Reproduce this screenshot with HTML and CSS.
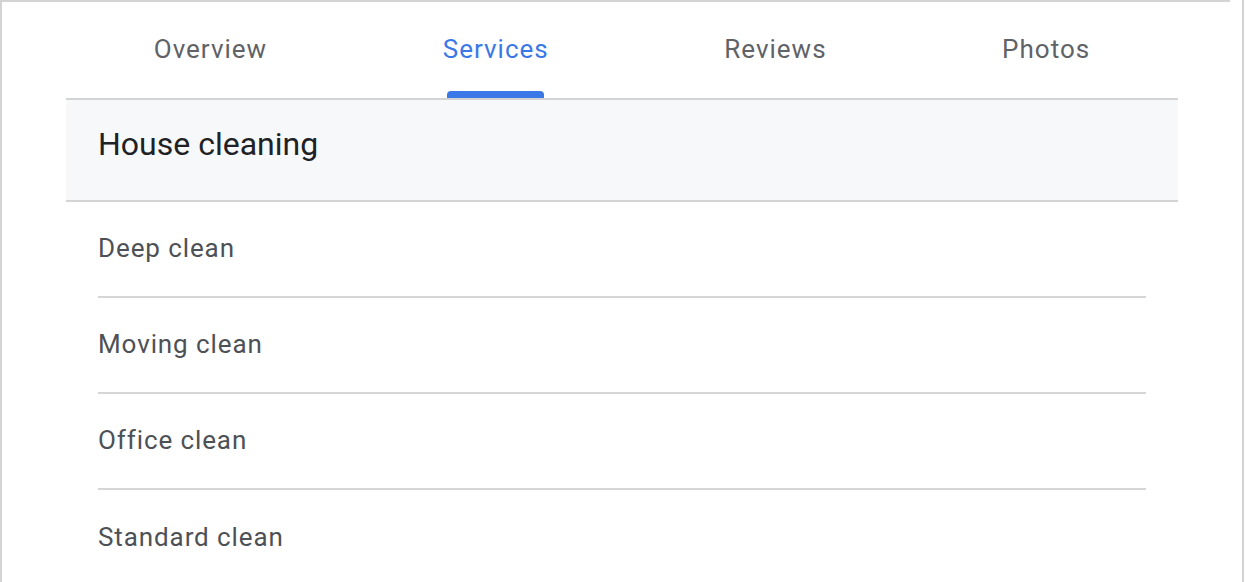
FILE: index.html
```html
<!DOCTYPE html>
<html>
<head>
<meta charset="utf-8">
<link rel="stylesheet" href="styles.css">
</head>
<body>
<div class="frame">
  <div class="top-edge"></div>
  <div class="panel">
    <nav class="tabs">
      <div class="tab">Overview</div>
      <div class="tab active">Services</div>
      <div class="tab">Reviews</div>
      <div class="tab">Photos</div>
    </nav>
    <div class="group-head">House cleaning</div>
    <ul class="list">
      <li class="row">Deep clean</li>
      <li class="row">Moving clean</li>
      <li class="row">Office clean</li>
      <li class="row last">Standard clean</li>
    </ul>
  </div>
</div>
</body>
</html>
```
FILE: styles.css
```css
* { box-sizing: border-box; }
html, body { margin: 0; padding: 0; background: #fff; }
body {
  font-family: Roboto, "Liberation Sans", Arial, sans-serif;
  width: 1246px;
  height: 582px;
  overflow: hidden;
}
.frame {
  width: 1244px;
  height: 582px;
  border-left: 2px solid #d3d3d3;
  border-right: 2px solid #d3d3d3;
}
.top-edge {
  width: 1228px;
  height: 2px;
  background: #d3d3d3;
}
.panel {
  margin: 0 64px;
}
.tabs {
  display: flex;
  justify-content: space-around;
  height: 98px;
  border-bottom: 2px solid #d3d3d3;
}
.tab {
  position: relative;
  font-size: 26px;
  color: #5f6368;
  line-height: 30px;
  padding-top: 32px;
  letter-spacing: 1px;
}
.tab.active { color: #3b78e7; }
.tab.active::after {
  content: "";
  position: absolute;
  left: 50%;
  bottom: 0;
  width: 97px;
  margin-left: -49px;
  height: 7px;
  background: #3b78e7;
  border-radius: 4px 4px 0 0;
}
.group-head {
  height: 102px;
  background: #f7f8fa;
  border-bottom: 2px solid #d3d3d3;
  padding: 24px 0 0 32px;
  font-size: 32px;
  line-height: 40px;
  color: #202124;
}
.list {
  list-style: none;
  margin: 0 32px;
  padding: 0;
}
.row {
  height: 96px;
  border-bottom: 2px solid #d6d6d6;
  padding-top: 31px;
  font-size: 26px;
  line-height: 30px;
  letter-spacing: 0.9px;
  color: #4d5156;
}
.row.last { border-bottom: none; padding-top: 32px; }
```
